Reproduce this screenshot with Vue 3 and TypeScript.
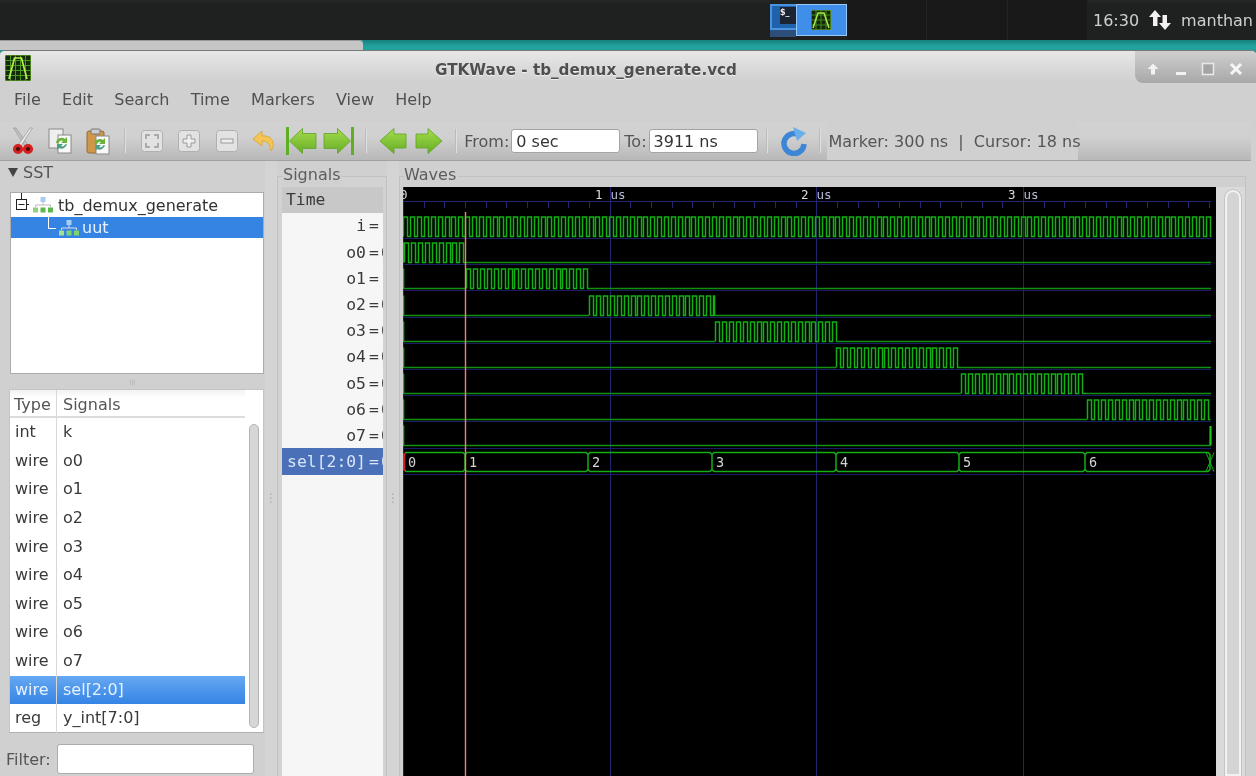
<script setup lang="ts">
const menus = ['File', 'Edit', 'Search', 'Time', 'Markers', 'View', 'Help']
const signals = [
  ['int', 'k'], ['wire', 'o0'], ['wire', 'o1'], ['wire', 'o2'], ['wire', 'o3'], ['wire', 'o4'],
  ['wire', 'o5'], ['wire', 'o6'], ['wire', 'o7'], ['wire', 'sel[2:0]'], ['reg', 'y_int[7:0]'],
]
const traces = [
  ['i', '1'], ['o0', '0'], ['o1', '1'], ['o2', '0'], ['o3', '0'], ['o4', '0'], ['o5', '0'], ['o6', '0'], ['o7', '0'],
]

const X0 = 403
const Y0 = 187
const lows = [236, 261.7, 288, 314.5, 341, 367, 393, 419, 445].map((v) => Math.round(v - Y0) + 0.5)

function pulses(start: number, end: number, low: number): string {
  const high = low - 19.5
  const stop = end - X0 + 0.5
  let x = start - X0 + 0.5
  let d = `M${x} ${low}`
  let n = 0
  while (x < stop) {
    const hx = Math.min(x + 4, stop)
    d += `L${x} ${high}L${hx} ${high}L${hx} ${low}`
    n += 1
    const gap = n % 7 === 0 ? 2 : 3
    const lx = Math.min(hx + gap, stop)
    d += `L${lx} ${low}`
    x = lx
  }
  return d
}

const active: [number, number, number][] = [
  [0, 403, 1211], [1, 404, 465], [2, 466, 588], [3, 589, 714], [4, 715, 836],
  [5, 836, 958], [6, 961, 1085], [7, 1087, 1210],
]
const pulsePaths = active.map(([r, a, b]) => pulses(a, b, lows[r]))

const lowSegs: [number, number, number][] = [
  [1, 465, 1211], [2, 403, 466], [2, 588, 1211], [3, 403, 589], [3, 714, 1211], [4, 403, 715], [4, 836, 1211],
  [5, 403, 836], [5, 958, 1211], [6, 403, 961], [6, 1085, 1211], [7, 403, 1087], [8, 403, 1211],
]
const lowPaths = lowSegs.map(([r, a, b]) => `M${a - X0} ${lows[r]}H${b - X0}`).join('')
const startPaths = lows.slice(1).map((l) => `M0.5 ${l - 20}V${l}`).join('')

const separators = Array.from({ length: 10 }, (_, i) => Math.round(238 + 26.2 * i - Y0) + 0.5)
const ticks = Array.from({ length: 40 }, (_, i) => Math.round(20.67 * i) + 0.5)
const majors = [207, 413, 620].map((v) => v + 0.5)
const cursorX = 62.5

const busTop = 265.5
const busBot = 284.5
const cuts = [1, 62, 185, 309, 433, 556, 682, 807]
const busPath = cuts
  .slice(0, -1)
  .map((a, i) => {
    const b = cuts[i + 1]
    return `M${a + 2} ${busTop}H${b - 2}L${b} ${busTop + 2}V${busBot - 2}L${b - 2} ${busBot}H${a + 2}L${a} ${busBot - 2}V${busTop + 2}Z`
  })
  .join('')
const busLabels = cuts.slice(0, -1).map((a, i) => ({ x: a + 3, t: String(i) }))
</script>

<template>
  <div class="screen">
    <header class="panel">
      <div class="panel-left"></div>
      <div class="pager">
        <div class="pager-term"><span class="term-ico">$_</span></div>
        <div class="pager-cur">
          <svg width="20" height="20" viewBox="0 0 20 20">
            <rect width="20" height="20" fill="#16290c" stroke="#7fbf30" />
            <path d="M0 5H20M0 10H20M0 15H20M5 0V20M10 0V20M15 0V20" stroke="#3f8a1c" />
            <path d="M2 18L7 3H13L18 18" fill="none" stroke="#a8e848" stroke-width="1.5" />
          </svg>
        </div>
      </div>
      <div class="panel-slots"><i></i><i></i><i></i></div>
      <div class="panel-right">
        <span>16:30</span>
        <svg width="24" height="22" viewBox="0 0 24 22">
          <path d="M7 1L13 8H9.5V17H5V8H1Z" fill="#f2f2f2" />
          <path d="M17 21L11 14H14.5V6H19V14H23Z" fill="#f2f2f2" />
        </svg>
        <span>manthan</span>
      </div>
    </header>
    <div class="behind"><div class="behind-tab"></div><div class="behind-teal"></div></div>

    <main class="window">
      <div class="titlebar">
        <svg class="logo" width="26" height="26" viewBox="0 0 26 26">
          <rect width="26" height="26" rx="1" fill="#142a0c" stroke="#7cc030" />
          <path d="M0 5.5H26M0 10.5H26M0 15.5H26M0 20.5H26M5.5 0V26M10.5 0V26M15.5 0V26M20.5 0V26" stroke="#4a9a20" />
          <path d="M4 24L9.5 3H16.5L22 24" fill="none" stroke="#b8f050" stroke-width="1.7" />
        </svg>
        <div class="title">GTKWave - tb_demux_generate.vcd</div>
        <div class="winbtns">
          <svg width="14" height="14" viewBox="0 0 14 14"><path d="M7 1.5L12.5 7H9V12.5H5V7H1.5Z" fill="#f2f2f2" /></svg>
          <svg width="14" height="14" viewBox="0 0 14 14"><rect x="2" y="10" width="10" height="3" fill="#f2f2f2" /></svg>
          <svg width="14" height="14" viewBox="0 0 14 14"><rect x="1.5" y="1.5" width="11" height="11" fill="#a4a4a4" stroke="#e8e8e8" stroke-width="1.6" /></svg>
          <svg width="14" height="14" viewBox="0 0 14 14"><path d="M2 2L12 12M12 2L2 12" stroke="#f6f6f6" stroke-width="3" /></svg>
        </div>
      </div>

      <nav class="menubar">
        <span v-for="m in menus" :key="m">{{ m }}</span>
      </nav>

      <div class="toolbar">
        <div class="tool">
          <svg width="22" height="28" viewBox="0 0 22 28">
            <path d="M1.5 1L13 19L15.5 17.5L4 1Z" fill="#c4c4c4" stroke="#8c8c8c" stroke-width=".6" />
            <path d="M20.5 1L9 19L6.5 17.5L18 1Z" fill="#e6e6e6" stroke="#8c8c8c" stroke-width=".6" />
            <circle cx="6" cy="22" r="3.6" fill="#4a0d0d" stroke="#d62020" stroke-width="3" />
            <circle cx="16" cy="22" r="3.6" fill="#4a0d0d" stroke="#d62020" stroke-width="3" />
          </svg>
        </div>
        <div class="tool">
          <svg width="24" height="26" viewBox="0 0 24 26">
            <rect x="1" y="1" width="14" height="19" fill="#efefef" stroke="#8a8a8a" />
            <rect x="10" y="7" width="13" height="18" fill="#f8f8f8" stroke="#8a8a8a" />
            <path d="M8 15A5.5 5.5 0 0 1 17 11L19 9V15H13L15 13A3 3 0 0 0 10.5 15.5Z" fill="#69b33a" />
            <path d="M19 16A5.5 5.5 0 0 1 11 20L9 22V16H15L13 18A3 3 0 0 0 17 16.5Z" fill="#4c9e86" />
          </svg>
        </div>
        <div class="tool">
          <svg width="24" height="27" viewBox="0 0 24 27">
            <rect x="1" y="3" width="17" height="22" rx="2" fill="#cf9748" stroke="#94693a" />
            <rect x="5" y="1" width="9" height="5" rx="1" fill="#ccc" stroke="#777" />
            <rect x="10" y="8" width="13" height="18" fill="#f8f8f8" stroke="#8a8a8a" />
            <path d="M8.5 16A5.5 5.5 0 0 1 17 12L19 10V16H13L15 14A3 3 0 0 0 11 16.5Z" fill="#69b33a" />
            <path d="M19 17A5.5 5.5 0 0 1 11 21L9.5 23V17H15L13 19A3 3 0 0 0 17 17.5Z" fill="#4c9e86" />
          </svg>
        </div>
        <div class="sep"><i></i></div>
        <div class="tool">
          <svg width="24" height="24" viewBox="0 0 24 24">
            <rect x="1.5" y="1.5" width="21" height="21" rx="3" fill="#e2e2e2" stroke="#b0b0b0" />
            <path d="M6 10V6H10M14 6H18V10M18 14V18H14M10 18H6V14" fill="none" stroke="#9a9a9a" stroke-width="1.5" />
          </svg>
        </div>
        <div class="tool">
          <svg width="24" height="24" viewBox="0 0 24 24">
            <rect x="1.5" y="1.5" width="21" height="21" rx="3" fill="#e2e2e2" stroke="#b0b0b0" />
            <path d="M10 6H14V10H18V14H14V18H10V14H6V10H10Z" fill="#eee" stroke="#9a9a9a" />
          </svg>
        </div>
        <div class="tool">
          <svg width="24" height="24" viewBox="0 0 24 24">
            <rect x="1.5" y="1.5" width="21" height="21" rx="3" fill="#e2e2e2" stroke="#b0b0b0" />
            <rect x="6" y="10" width="12" height="4" fill="#eee" stroke="#9a9a9a" />
          </svg>
        </div>
        <div class="tool">
          <svg width="24" height="24" viewBox="0 0 24 24">
            <path d="M10 2L1 10L10 17V12C15 12 18 14 19 22C23 16 22 6 10 7Z" fill="#f4c656" stroke="#e0aa38" />
          </svg>
        </div>
        <div class="tool">
          <svg width="31" height="28" viewBox="0 0 31 28">
            <defs>
              <linearGradient id="arrowfill" x1="0" y1="0" x2="0" y2="1">
                <stop offset="0" stop-color="#a6dc4c" />
                <stop offset="1" stop-color="#66ad26" />
              </linearGradient>
            </defs>
            <rect x="0" y="0" width="3" height="28" fill="#5faf25" />
            <path d="M3.5 14L16.5 1.5V6.5H30V21.5H16.5V26.5Z" fill="url(#arrowfill)" stroke="#5da324" stroke-width=".8" />
          </svg>
        </div>
        <div class="tool">
          <svg width="31" height="28" viewBox="0 0 31 28">
            <rect x="28" y="0" width="3" height="28" fill="#5faf25" />
            <path d="M27.5 14L14.5 1.5V6.5H1V21.5H14.5V26.5Z" fill="url(#arrowfill)" stroke="#5da324" stroke-width=".8" />
          </svg>
        </div>
        <div class="sep"><i></i></div>
        <div class="tool narrow">
          <svg width="28" height="28" viewBox="0 0 28 28"><path d="M1 14L15 1.5V7H27V21H15V26.5Z" fill="url(#arrowfill)" stroke="#5da324" stroke-width=".8" /></svg>
        </div>
        <div class="tool narrow">
          <svg width="28" height="28" viewBox="0 0 28 28"><path d="M27 14L13 1.5V7H1V21H13V26.5Z" fill="url(#arrowfill)" stroke="#5da324" stroke-width=".8" /></svg>
        </div>
        <div class="sep"><i></i></div>
        <label class="tlabel">From:</label>
        <input class="tinput" value="0 sec" />
        <label class="tlabel to">To:</label>
        <input class="tinput" value="3911 ns" />
        <div class="sep wide"><i></i></div>
        <div class="tool refresh">
          <svg width="28" height="30" viewBox="0 0 28 30">
            <path d="M20 9.5A10 10 0 1 0 24 18" fill="none" stroke="#3d86d6" stroke-width="5.5" />
            <path d="M13 1L26 7L17 15Z" fill="#6aaeea" />
          </svg>
        </div>
        <div class="sep slim"><i></i></div>
        <div class="marker">Marker: 300 ns&nbsp;&nbsp;|&nbsp;&nbsp;Cursor: 18 ns</div>
      </div>

      <div class="content">
        <aside class="left">
          <div class="sst"><span class="tri"></span>SST</div>
          <div class="tree">
            <div class="tree-row">
              <svg class="tree-exp" width="16" height="24" viewBox="0 0 16 24">
                <path d="M7.5 0V6M12 11.5H15" stroke="#222" fill="none" />
                <rect x="2.5" y="6.5" width="10" height="10" fill="#fff" stroke="#222" />
                <path d="M4.5 11.5H10.5" stroke="#222" />
              </svg>
              <svg class="hier" width="20" height="16" viewBox="0 0 20 16">
                <rect x="7.5" y="0" width="5" height="5" fill="#a9cdee" />
                <path d="M10 5V8M2.5 10V8H17.5V10" stroke="#bbb" fill="none" />
                <rect x="0" y="10.5" width="5" height="5" fill="#93cf7e" />
                <rect x="7.5" y="10.5" width="5" height="5" fill="#5eb84e" />
                <rect x="15" y="10.5" width="5" height="5" fill="#5eb84e" />
              </svg>
              <span>tb_demux_generate</span>
            </div>
            <div class="tree-row sel">
              <svg class="tree-l" width="10" height="21" viewBox="0 0 10 21"><path d="M1.5 0V11.5H9" stroke="#fff" fill="none" /></svg>
              <svg class="hier" width="20" height="16" viewBox="0 0 20 16">
                <rect x="7.5" y="0" width="5" height="5" fill="#a9cdee" />
                <path d="M10 5V8M2.5 10V8H17.5V10" stroke="#dde" fill="none" />
                <rect x="0" y="10.5" width="5" height="5" fill="#a4e08e" />
                <rect x="7.5" y="10.5" width="5" height="5" fill="#7fd46e" />
                <rect x="15" y="10.5" width="5" height="5" fill="#7fd46e" />
              </svg>
              <span>uut</span>
            </div>
          </div>
          <div class="hgrip">|||</div>
          <div class="list">
            <div class="list-main">
              <div class="lrow head"><span class="ty">Type</span><span class="nm">Signals</span></div>
              <div v-for="s in signals" :key="s[1]" class="lrow" :class="{ active: s[1] === 'sel[2:0]' }">
                <span class="ty">{{ s[0] }}</span><span class="nm">{{ s[1] }}</span>
              </div>
            </div>
            <div class="list-scroll"><div class="list-thumb"></div></div>
          </div>
          <div class="filter"><label>Filter:</label><input /></div>
        </aside>

        <div class="vgrip"><span>⋮</span></div>

        <section class="frame sigframe">
          <span class="legend">Signals</span>
          <div class="siglist">
            <div class="sighead">Time</div>
            <div v-for="t in traces" :key="t[0]" class="sigrow">
              <span class="signame">{{ t[0] }}</span><span class="eq">=</span><span class="val">{{ t[1] }}</span>
            </div>
            <div class="sigrow cur"><span class="signame">sel[2:0]</span><span class="eq">=</span><span class="val">0</span></div>
          </div>
        </section>

        <div class="vgrip second"><span>⋮</span></div>

        <section class="frame waveframe">
          <span class="legend wl">Waves</span>
          <svg class="waves" width="813" height="589" viewBox="0 0 813 589">
            <rect width="813" height="589" fill="#000" />
            <g shape-rendering="crispEdges">
              <path d="M0 14.5H808" stroke="#26266e" />
              <path v-for="t in ticks" :key="t" :d="`M${t} 14.5V21`" stroke="#26266e" />
              <path v-for="m in majors" :key="m" :d="`M${m} 0V589`" stroke="#24246e" />
              <path d="M0.5 0V589" stroke="#24246e" />
              <path v-for="s in separators" :key="s" :d="`M0 ${s}H808`" stroke="#1c1c66" />
            </g>
            <text x="-3" y="11.5" class="ts">0</text>
            <text x="192" y="11.5" class="ts">1</text><text x="207.500" y="11.5" class="ts us">us</text>
            <text x="398" y="11.5" class="ts">2</text><text x="413.500" y="11.5" class="ts us">us</text>
            <text x="605" y="11.5" class="ts">3</text><text x="620.500" y="11.5" class="ts us">us</text>
            <path :d="lowPaths" stroke="#129012" fill="none" stroke-width="1.5" />
            <path :d="startPaths" stroke="#18b818" fill="none" stroke-width="1.6" />
            <path v-for="(p, i) in pulsePaths" :key="i" :d="p" stroke="#12b012" fill="none" stroke-width="1.5" />
            <path d="M807.5 239V258" stroke="#18c818" stroke-width="2.2" />
            <path :d="busPath" stroke="#12b012" fill="none" stroke-width="1.5" />
            <path d="M803 265.5L811 284.5M811 265.5L803 284.5" stroke="#12b012" fill="none" />
            <path d="M1.5 266V284" stroke="#d02020" stroke-width="1.5" />
            <text v-for="b in busLabels" :key="b.t" :x="b.x + 1" y="280" class="bus">{{ b.t }}</text>
            <path :d="`M${cursorX} 25V589`" stroke="#f47e78" stroke-width="1.4" />
          </svg>
          <div class="wscroll"><div class="wthumb"></div></div>
        </section>
      </div>
    </main>
  </div>
</template>

<style scoped>
.screen {
  width: 1256px;
  height: 776px;
  overflow: hidden;
  display: flex;
  flex-direction: column;
  font-family: "DejaVu Sans", sans-serif;
  font-size: 16px;
  background: #1f9d99;
  filter: blur(0.4px);
}
.panel {
  height: 40px;
  flex: none;
  display: flex;
  background: linear-gradient(#262827, #1f2120 10%, #1f2120);
}
.panel-left { width: 770px; }
.pager { width: 77px; height: 37px; position: relative; background: #1f2120; }
.pager::after {
  content: "";
  position: absolute;
  left: 0;
  bottom: 0;
  width: 26px;
  height: 7px;
  background: #2c4e78;
}
.pager-term {
  position: absolute;
  left: 0;
  top: 4px;
  width: 40px;
  height: 26px;
  box-sizing: border-box;
  background: #1f62ab;
  border: 2px solid #4a93e0;
}
.term-ico {
  display: block;
  margin: 1px 0 0 8px;
  width: 16px;
  height: 17px;
  background: #1c2431;
  color: #eee;
  font-size: 8px;
  font-weight: bold;
  line-height: 11px;
}
.pager-cur {
  position: absolute;
  left: 26px;
  top: 4px;
  width: 51px;
  height: 32px;
  box-sizing: border-box;
  background: #3f8ee9;
  border: 1px solid #9ac8f8;
  display: flex;
  align-items: center;
  justify-content: center;
  padding-right: 2px;
}
.panel-slots { width: 240px; display: flex; background: #191919; }
.panel-slots i { flex: 1; border-right: 1px solid #242424; }
.panel-slots i:last-child { border: none; }
.panel-right {
  flex: 1;
  display: flex;
  align-items: center;
  padding-left: 6px;
  color: #cfcfcf;
  font-size: 16px;
  gap: 9px;
}
.behind { height: 10px; flex: none; display: flex; }
.behind-tab { width: 363px; background: #c6c6c6; border-top: 1px solid #999; border-radius: 0 4px 0 0; box-sizing: border-box; }
.behind-teal { flex: 1; background: linear-gradient(#17807e, #22a29d 60%); }
.window {
  flex: 1;
  min-height: 0;
  display: flex;
  flex-direction: column;
  background: #d0d0d0;
  border-radius: 5px 5px 0 0;
  overflow: hidden;
  color: #555;
  border-top: 1px solid #77797a;
}
.titlebar {
  height: 31px;
  flex: none;
  position: relative;
  display: flex;
  align-items: center;
  justify-content: center;
  background: linear-gradient(#e7e7e7, #d0d0d0);
}
.logo { position: absolute; left: 5px; top: 4px; }
.title {
  font-weight: bold;
  font-size: 15.2px;
  color: #4f4f4f;
  text-shadow: 0 1px 0 #eee;
  padding: 6px 84px 0 0;
}
.winbtns {
  position: absolute;
  right: 0;
  top: 0;
  width: 121px;
  height: 32px;
  box-sizing: border-box;
  border-radius: 0 0 0 8px;
  background: linear-gradient(#cfcfcf, #a8a8a8);
  display: flex;
  align-items: center;
  justify-content: space-between;
  padding: 4px 13px 0 11px;
}
.menubar {
  height: 40px;
  flex: none;
  display: flex;
  align-items: center;
  padding: 0 0 5px 14px;
  box-sizing: border-box;
  gap: 21.3px;
  color: #505050;
}
.toolbar {
  height: 39px;
  flex: none;
  display: flex;
  align-items: center;
  padding: 0 0 0 4.3px;
  margin-right: 5px;
  box-sizing: border-box;
  background: linear-gradient(#d2d2d2, #d0d0d0 40%, #b8b8b8);
  border-bottom: 1px solid #a2a2a2;
}
.tool { width: 37.33px; flex: none; display: flex; justify-content: center; align-items: center; }
.tool.narrow { width: 36.5px; }
.sep { width: 17px; flex: none; display: flex; justify-content: center; }
.sep i { width: 2px; height: 24px; background: #dfdfdf; border-left: 1px solid #bbb; box-sizing: border-box; }
.sep.wide { width: 18px; }
.sep.slim { width: 14px; }
.tool.refresh { width: 37px; }
.tlabel { flex: none; margin-right: 2px; }
.tlabel.to { margin-left: 4px; }
.tinput {
  width: 109px;
  height: 24px;
  flex: none;
  box-sizing: border-box;
  border: 1px solid #a4a4a4;
  border-radius: 3px;
  background: #fff;
  font: 16px "DejaVu Sans", sans-serif;
  color: #333;
  padding: 0 4px;
}
.marker {
  height: 38px;
  width: 251px;
  flex: none;
  display: flex;
  align-items: center;
  padding-left: 2px;
  box-sizing: border-box;
  background: #d0d0d0;
  white-space: nowrap;
}
.content { flex: 1; min-height: 0; display: flex; }
.left { width: 265px; flex: none; }
.sst { height: 31px; display: flex; align-items: center; padding-left: 8px; gap: 5px; color: #555; padding-bottom: 8px; box-sizing: border-box; line-height: 1; }
.tri {
  width: 0;
  height: 0;
  border-left: 5px solid transparent;
  border-right: 5px solid transparent;
  border-top: 9px solid #444;
}
.tree {
  margin-left: 10px;
  width: 254px;
  height: 182px;
  box-sizing: border-box;
  background: #fff;
  border: 1px solid #ababab;
  color: #333;
}
.tree-row { height: 24px; display: flex; align-items: center; padding-left: 3px; }
.tree-row.sel { height: 21px; background: #3584e4; color: #e8f2ff; padding-left: 36px; }
.tree-exp { margin-right: 3px; margin-top: -1px; }
.hier { margin: 0 5px 0 0; }
.tree-row.sel .hier { margin-left: 2px; margin-right: 3px; }
.tree-l { align-self: flex-start; }
.hgrip { height: 15px; text-align: center; font-size: 6px; line-height: 15px; color: #aaa; }
.list {
  margin-left: 9px;
  width: 255px;
  height: 344px;
  box-sizing: border-box;
  background: #fff;
  border: 1px solid #c4c4c4;
  border-bottom-color: #b0b0b0;
  display: flex;
  color: #3a3a3a;
}
.list-main { width: 235px; flex: none; }
.lrow { height: 28.6px; display: flex; align-items: center; box-sizing: border-box; }
.lrow.head { height: 28.4px; color: #555; border-bottom: 2px solid #dcdcdc; background: linear-gradient(#f2f2f2, #fff 30%); }
.ty { width: 47px; height: 100%; display: flex; align-items: center; padding: 0 0 2px 5px; box-sizing: border-box; border-right: 1px solid #d8d8d8; }
.lrow.head .ty { padding: 2px 0 0 4px; }
.nm { padding: 0 0 2px 6px; }
.lrow.head .nm { padding: 2px 0 0 6px; }
.lrow.active { background: linear-gradient(#66a8f2, #3584e4); color: #e6f1ff; }
.list-scroll { flex: 1; background: #fff; padding: 34px 3px 3px 4px; }
.list-thumb { width: 10px; height: 304px; box-sizing: border-box; border-radius: 5px; background: #d6d6d6; border: 1px solid #b4b4b4; }
.filter { display: flex; align-items: center; margin-top: 11px; padding-left: 6px; gap: 6px; }
.filter input {
  width: 197px;
  height: 30px;
  box-sizing: border-box;
  background: #fff;
  border: 1px solid #ababab;
  border-radius: 3px;
}
.vgrip {
  width: 12px;
  flex: none;
  display: flex;
  align-items: center;
  justify-content: center;
  padding-top: 58px;
  color: #aaa;
  font-size: 12px;
  background: #d4d4d4;
}
.frame {
  position: relative;
  margin-top: 15px;
  box-sizing: border-box;
  border: 1px solid #c2c2c2;
  border-bottom: none;
}
.legend {
  position: absolute;
  left: 5px;
  top: -12px;
  line-height: 20px;
  padding-right: 2px;
  background: #d0d0d0;
  color: #5d5d5d;
}
.legend.wl { left: 4px; }
.sigframe { width: 110px; flex: none; padding: 10px 3px 0 4px; background: #d2d2d2; }
.siglist { height: 100%; background: #f6f6f6; overflow: hidden; font: 16.4px "DejaVu Sans Mono", monospace; color: #3a3a3a; }
.sighead { height: 25.8px; background: #c8c8c8; padding-left: 4px; line-height: 25px; color: #3a3a3a; }
.sigrow { height: 26.2px; display: flex; align-items: center; box-sizing: border-box; position: relative; }
.signame { width: 84px; text-align: right; flex: none; }
.eq { width: 12px; margin-left: 3px; flex: none; }
.val { flex: none; }
.sigrow.cur { background: #4a70b8; color: #d9e4f7; }
.waveframe { flex: 1; min-width: 0; display: flex; padding: 10px 0 0 3px; margin-right: 10px; background: #d0d0d0; }
.waves { display: block; flex: none; }
.ts { font: 12.5px "DejaVu Sans Mono", monospace; fill: #dcdcdc; }
.ts.us { fill: #b8bcd8; }
.bus { font: 13.5px "DejaVu Sans Mono", monospace; fill: #d4d4d4; }
.wscroll { width: 29px; flex: none; padding: 3px 0 0 9px; background: #dadada; box-sizing: border-box; }
.wthumb {
  width: 16px;
  height: 100%;
  box-sizing: border-box;
  border-radius: 8px 8px 0 0;
  background: #d4d4d4;
  border: 2px solid #f2f2f2;
  outline: 1px solid #c4c4c4;
}
</style>
